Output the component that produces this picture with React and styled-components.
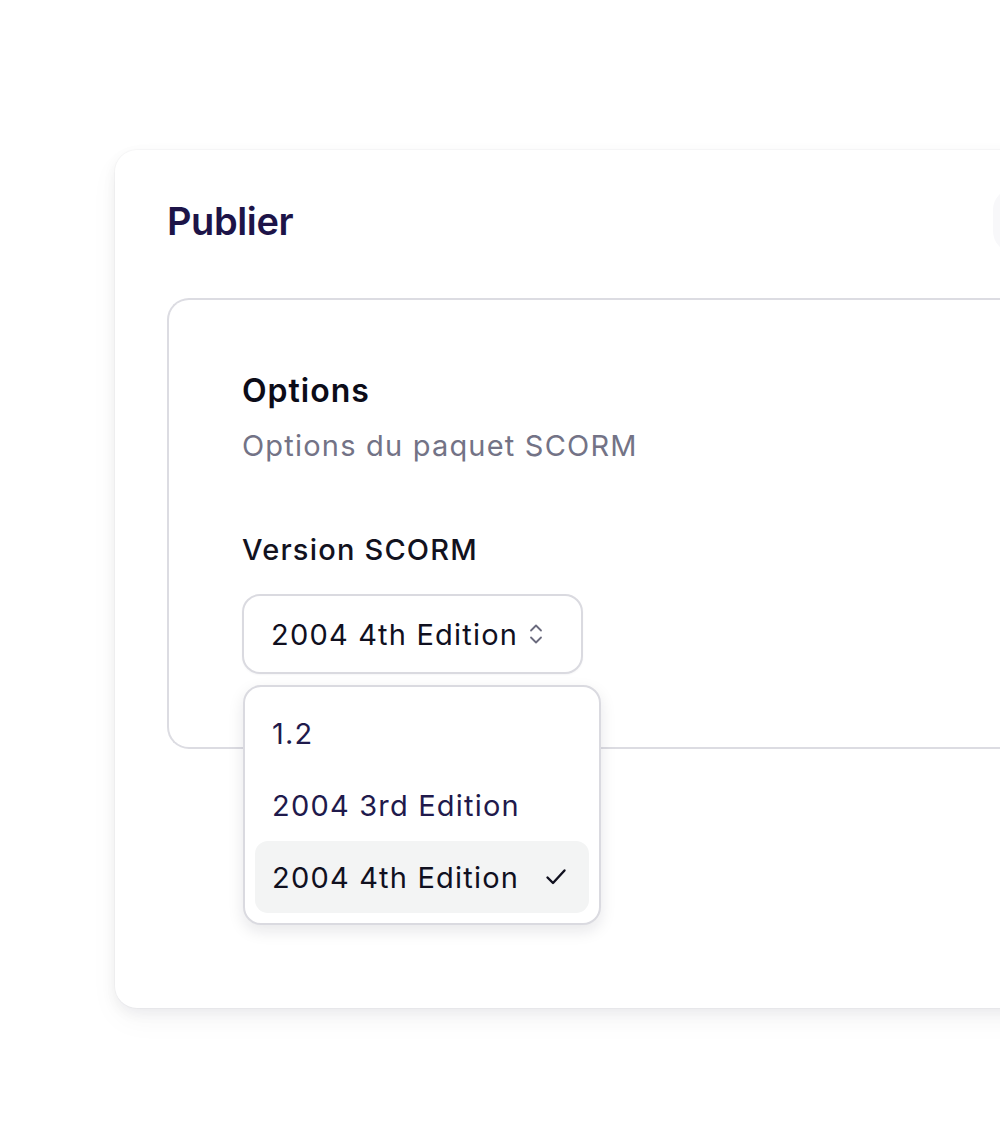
import React from "react";
import styled, { createGlobalStyle } from "styled-components";

const Global = createGlobalStyle`
  html, body { margin: 0; padding: 0; background: #ffffff; }
  body { font-family: Inter, "Noto Sans", sans-serif; overflow: hidden; -webkit-font-smoothing: antialiased; }
  * { box-sizing: border-box; }
`;

const Page = styled.div`
  width: 1000px;
  height: 1143px;
  overflow: hidden;
  padding: 150px 0 0 115px;
`;

const Card = styled.section`
  width: 1000px;
  background: #fff;
  border-radius: 22px;
  box-shadow: 0 0 0 1px rgba(20, 20, 40, 0.025), 0 5px 14px rgba(20, 20, 40, 0.06), 0 12px 30px rgba(20, 20, 40, 0.04);
  padding: 38px 0 259px 52px;
`;

const Header = styled.header`
  display: flex;
  align-items: center;
  justify-content: space-between;
  height: 65px;
  margin-bottom: 45px;
`;

const Title = styled.h1`
  margin: 0;
  font-size: 38px;
  font-weight: 600;
  letter-spacing: -0.4px;
  color: #1d1448;
`;

const GhostButton = styled.div`
  width: 122px;
  height: 65px;
  border-radius: 22px 0 0 22px;
  background: #f8f8fa;
`;

const Panel = styled.div`
  position: relative;
  border: 2px solid #dcdce2;
  border-right: none;
  border-radius: 22px 0 0 22px;
  padding: 72px 0 73px 73px;
`;

const PanelTitle = styled.h2`
  margin: 0;
  font-size: 32px;
  font-weight: 600;
  letter-spacing: 1px;
  color: #0c0c18;
  line-height: 38px;
`;

const PanelDesc = styled.p`
  margin: 18px 0 0;
  font-size: 29px;
  letter-spacing: 1.2px;
  color: #737386;
  line-height: 36px;
`;

const Label = styled.label`
  display: block;
  margin-top: 68px;
  font-size: 29px;
  font-weight: 500;
  letter-spacing: 1.2px;
  color: #12121e;
  line-height: 36px;
`;

const SelectWrap = styled.div`
  position: relative;
  margin-top: 26px;
  width: 341px;
`;

const Trigger = styled.button`
  display: flex;
  align-items: center;
  gap: 10px;
  width: 341px;
  height: 80px;
  padding: 0 0 0 27px;
  background: #fff;
  border: 2px solid #dadae0;
  border-radius: 18px;
  font-family: inherit;
  font-size: 29px;
  letter-spacing: 1.2px;
  color: #10101f;
  cursor: pointer;
  box-shadow: 0 1px 2px rgba(20, 20, 40, 0.04);
`;

const Menu = styled.ul`
  position: absolute;
  top: 91px;
  left: 1px;
  width: 358px;
  margin: 0;
  padding: 10px;
  list-style: none;
  background: #fff;
  border: 2px solid #dadae0;
  border-radius: 18px;
  box-shadow: 0 6px 16px rgba(20, 20, 40, 0.10);
  z-index: 2;
`;

const Item = styled.li`
  display: flex;
  align-items: center;
  justify-content: space-between;
  height: 72px;
  padding: 0 22px 0 17px;
  border-radius: 13px;
  font-size: 29px;
  letter-spacing: 1.2px;
  color: ${(p) => (p.$selected ? "#10101f" : "#1f1a4c")};
  background: ${(p) => (p.$selected ? "#f3f4f4" : "transparent")};
`;

const Chevrons = () => (
  <svg width="16" height="24" viewBox="0 0 16 24" fill="none" stroke="#6b6b7e" strokeWidth="1.8" strokeLinecap="round" strokeLinejoin="round">
    <path d="M3 8.5 L8 3.5 L13 8.5" />
    <path d="M3 15.5 L8 20.5 L13 15.5" />
  </svg>
);

const Check = () => (
  <svg width="22" height="20" viewBox="0 0 22 20" fill="none" stroke="#10101f" strokeWidth="2.4" strokeLinecap="round" strokeLinejoin="round">
    <path d="M2.5 10.5 L8 16 L19.5 3.5" />
  </svg>
);

const options = ["1.2", "2004 3rd Edition", "2004 4th Edition"];

export default function App() {
  const selected = "2004 4th Edition";
  return (
    <>
      <Global />
      <Page>
        <Card>
          <Header>
            <Title>Publier</Title>
            <GhostButton />
          </Header>
          <Panel>
            <PanelTitle>Options</PanelTitle>
            <PanelDesc>Options du paquet SCORM</PanelDesc>
            <Label>Version SCORM</Label>
            <SelectWrap>
              <Trigger>
                {selected}
                <Chevrons />
              </Trigger>
              <Menu>
                {options.map((o) => (
                  <Item key={o} $selected={o === selected}>
                    {o}
                    {o === selected && <Check />}
                  </Item>
                ))}
              </Menu>
            </SelectWrap>
          </Panel>
        </Card>
      </Page>
    </>
  );
}
